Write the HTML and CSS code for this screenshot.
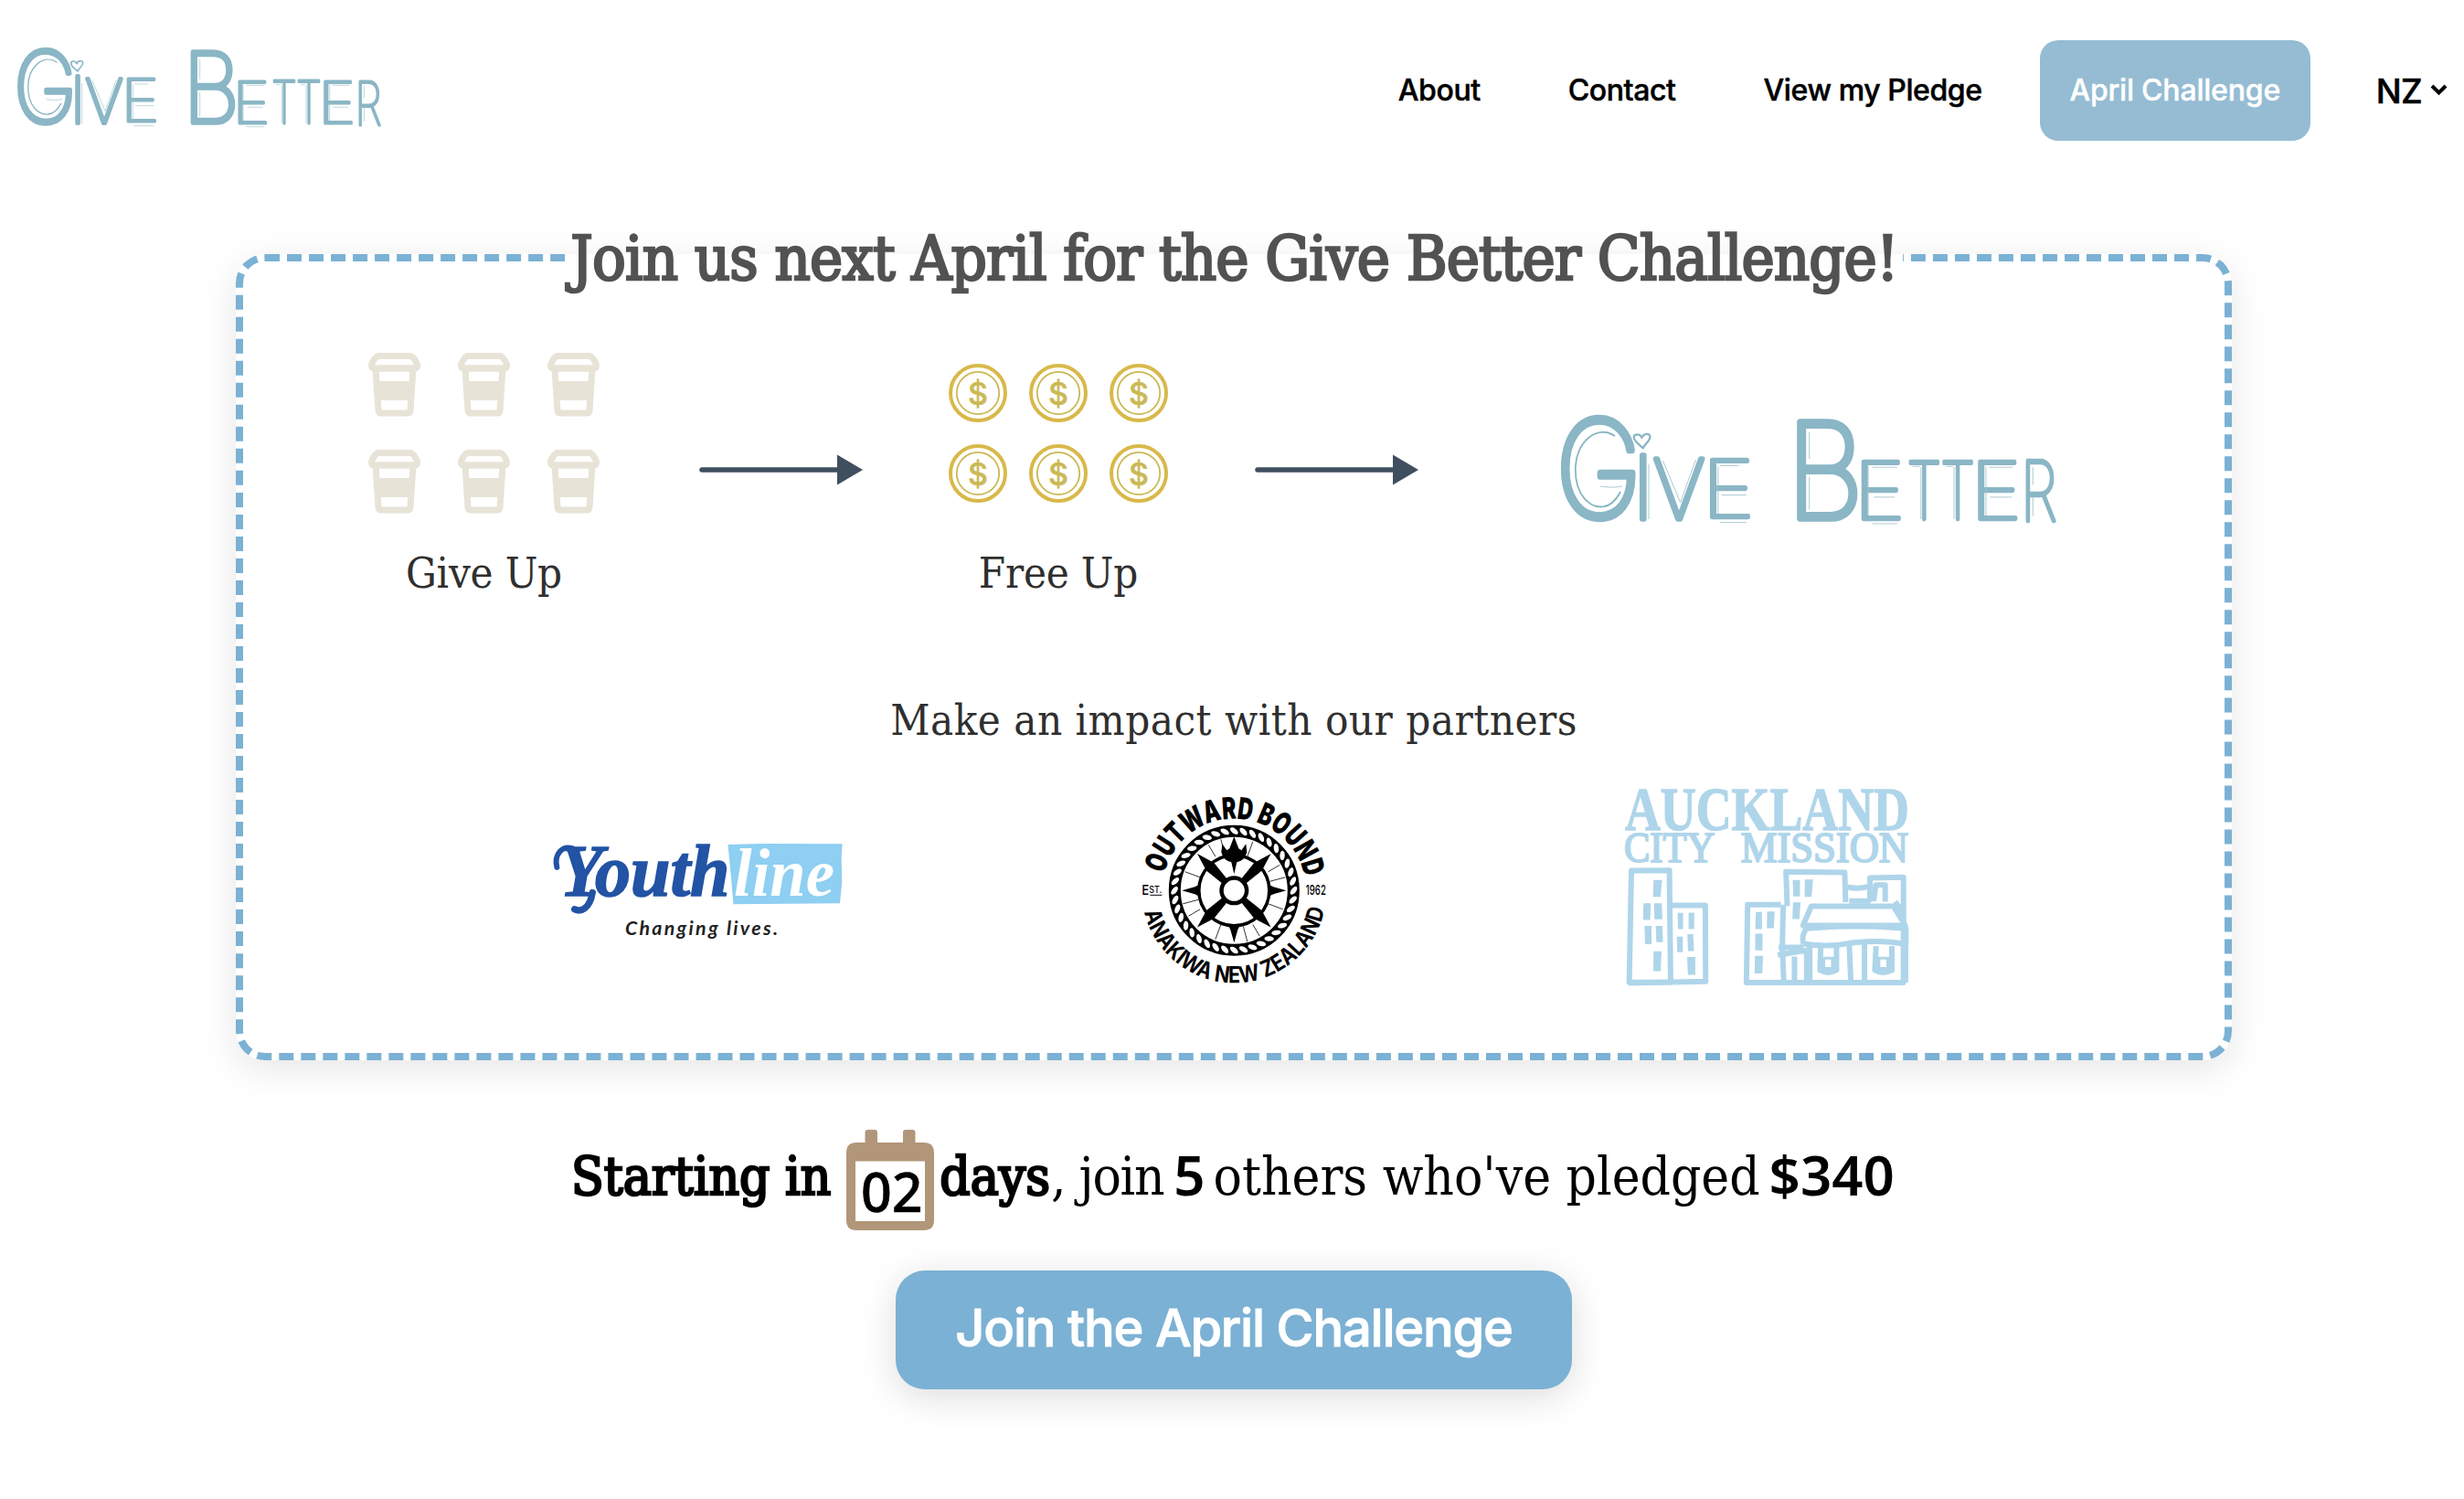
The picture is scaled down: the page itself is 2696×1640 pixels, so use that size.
FILE: index.html
```html
<!DOCTYPE html>
<html lang="en">
<head>
<meta charset="utf-8">
<title>Give Better</title>
<link rel="stylesheet" href="styles.css">
</head>
<body>
<svg class="defs" aria-hidden="true">
  <symbol id="cup" viewBox="0 0 57 70">
    <path class="cup-line" d="M11 3.500H46C49 3.500 53.500 11 53.500 14C53.500 16 52.500 17 51 17H6C4.500 17 3.500 16 3.500 14C3.500 11 8 3.500 11 3.500Z"/>
    <path class="cup-line" d="M8 17H49L46 63Q45.800 66 43 66H14Q11.200 66 11 63Z"/>
    <path class="cup-fill" d="M9 31H48L47 52H10Z"/>
  </symbol>
  <symbol id="coin" viewBox="0 0 64 64">
    <circle class="coin-rim" cx="32" cy="32" r="30"/>
    <circle class="coin-ring" cx="32" cy="32" r="23.200"/>
    <text class="coin-text" x="32" y="44.500">$</text>
  </symbol>
  <symbol id="arrow" viewBox="0 0 179 34">
    <path class="arrow-line" d="M3 17H155"/>
    <path class="arrow-head" d="M151 .5L179 17L151 33.500Z"/>
  </symbol>
  <g id="wordmark">
    <g class="big-letters">
      <text transform="translate(44 311) scale(.87 1)" font-size="324">G</text>
      <text transform="translate(601 313) scale(.91 1)" font-size="319">B</text>
    </g>
    <g class="small-letters">
      <text class="stem" transform="translate(228.500 314)" font-size="213">I</text>
      <text class="stem" transform="translate(279 315) scale(.98 1)" font-size="201">V</text>
      <text transform="translate(397 310) scale(1.130 1)" font-size="192">E</text>
      <text transform="translate(763 315) scale(1.110 1)" font-size="191">E</text>
      <text transform="translate(891 315) scale(.715 1)" font-size="191">T</text>
      <text transform="translate(972 315) scale(.715 1)" font-size="191">T</text>
      <text transform="translate(1044 315) scale(1.110 1)" font-size="191">E</text>
      <text transform="translate(1165 320) scale(.725 1)" font-size="199">R</text>
    </g>
    <path class="heart" d="M255 144C246 134 233 128 233 118C233 109 248 108 252 119C256 107 273 107 272 117C271 128 260 132 255 144Z"/>
    <path class="shade" d="M186 114C145 86 92 128 92 195C92 262 130 288 158 285C178 283 192 265 200 250"/>
    <path class="hair" d="M152 236Q180 241 205 236M269 183V315M303 174L345 275L382 172M436 188V302M440 186H485M444 257H504M440 323H505M656 105V170M656 213V292M798 188V306M808 190H868M812 262H862M808 326H868M925 190V315M905 188H923M1005 190V315M987 188H1003M1082 188V306M1090 190H1146M1092 262H1144M1195 190V232M1195 262V308"/>
  </g>
</svg>

<header class="header">
  <svg class="brand" viewBox="0 12 1320 390" role="img" aria-label="Give Better"><use href="#wordmark"/></svg>
  <nav class="nav">
    <a class="link">About</a>
    <a class="link">Contact</a>
    <a class="link">View my Pledge</a>
    <a class="cta">April Challenge</a>
    <div class="region">NZ
      <svg class="chevron" viewBox="0 0 19 12"><path d="M2 2L9.500 9.500L17 2"/></svg>
    </div>
  </nav>
</header>

<main class="main">
  <fieldset class="card">
    <legend class="title">Join us next April for the Give Better Challenge!</legend>
    <div class="steps">
      <div class="step">
        <div class="cups">
          <svg><use href="#cup"/></svg><svg><use href="#cup"/></svg><svg><use href="#cup"/></svg>
          <svg><use href="#cup"/></svg><svg><use href="#cup"/></svg><svg><use href="#cup"/></svg>
        </div>
        <p class="label">Give Up</p>
      </div>
      <svg class="arrow first"><use href="#arrow"/></svg>
      <div class="step">
        <div class="coins">
          <svg><use href="#coin"/></svg><svg><use href="#coin"/></svg><svg><use href="#coin"/></svg>
          <svg><use href="#coin"/></svg><svg><use href="#coin"/></svg><svg><use href="#coin"/></svg>
        </div>
        <p class="label">Free Up</p>
      </div>
      <svg class="arrow second"><use href="#arrow"/></svg>
      <svg class="wordmark" viewBox="0 0 1320 390" role="img" aria-label="Give Better"><use href="#wordmark"/></svg>
    </div>

    <h2 class="partners-title">Make an impact with our partners</h2>
    <div class="partners">
      <svg class="youthline" viewBox="75 60 955 320">
        <path class="yl-box" d="M650 77L760 74L1026 75L1023 120L1025 200L1018 270L668 273L660 180Z"/>
        <text class="yl-blue" x="96" y="246" textLength="560" lengthAdjust="spacingAndGlyphs">Youth</text>
        <path class="yl-swash" d="M88 152C78 110 104 80 138 90"/>
        <path class="yl-swash tail" d="M205 235C196 290 165 300 146 290"/>
        <text class="yl-white" x="670" y="247" textLength="330" lengthAdjust="spacingAndGlyphs">line</text>
        <text class="yl-tag" x="312" y="374" textLength="502">Changing lives.</text>
      </svg>

      <svg class="outward" viewBox="-120.300 -124.300 240 240">
        <defs>
          <path id="arc-top" d="M-78.500 0A78.500 78.500 0 0 1 78.500 0"/>
          <path id="arc-bottom" d="M-101 0A101 101 0 0 0 101 0"/>
          <ellipse id="strand" cx="0" cy="-65.200" rx="2.700" ry="5.200" transform="rotate(-52 0 -65.200)"/>
          <g id="strands5"><use href="#strand"/><use href="#strand" transform="rotate(9)"/><use href="#strand" transform="rotate(18)"/><use href="#strand" transform="rotate(27)"/><use href="#strand" transform="rotate(36)"/></g>
          <path id="spoke" d="M-3.500 -14L-6 -37L0 -57L6 -37L3.500 -14Z"/>
          <path id="point" d="M-6.500 -38L-4 -43L0 -57L4 -43L6.500 -38Z"/>
          <path id="rays" d="M14.500 -37.200L20.500 -53.500M37.200 -20.500L50 -28M39 -10L56 -14.500"/>
        </defs>
        <circle class="rope" r="65"/>
        <g class="strands">
          <use href="#strands5"/><use href="#strands5" transform="rotate(45)"/><use href="#strands5" transform="rotate(90)"/><use href="#strands5" transform="rotate(135)"/>
          <use href="#strands5" transform="rotate(180)"/><use href="#strands5" transform="rotate(225)"/><use href="#strands5" transform="rotate(270)"/><use href="#strands5" transform="rotate(315)"/>
        </g>
        <g class="rays"><use href="#rays"/><use href="#rays" transform="rotate(90)"/><use href="#rays" transform="rotate(180)"/><use href="#rays" transform="rotate(270)"/></g>
        <circle class="wheel" r="38.500"/>
        <use href="#spoke" transform="rotate(45)"/><use href="#spoke" transform="rotate(135)"/><use href="#spoke" transform="rotate(225)"/><use href="#spoke" transform="rotate(315)"/>
        <use href="#point" transform="rotate(90)"/><use href="#point" transform="rotate(180)"/><use href="#point" transform="rotate(270)"/>
        <path d="M0 -18L-3 -31Q-12 -33 -14 -42L-13 -51L-8 -44L-5 -46L0 -59L5 -46L8 -44L13 -51L14 -42Q12 -33 3 -31Z"/>
        <circle class="hub" r="13.800"/>
        <text class="ob-top"><textPath href="#arc-top" startOffset="18.500" textLength="213" lengthAdjust="spacingAndGlyphs">OUTWARD BOUND</textPath></text>
        <text class="ob-bottom"><textPath href="#arc-bottom" startOffset="24" textLength="272" lengthAdjust="spacingAndGlyphs">ANAKIWA NEW ZEALAND</textPath></text>
        <text class="ob-side" x="-101" y="5" textLength="22" lengthAdjust="spacingAndGlyphs">E<tspan font-size="10" dy="-2">ST.</tspan></text>
        <path d="M-92 4.500H-79V5.500H-92Z"/>
        <text class="ob-side" x="78.500" y="5" textLength="22" lengthAdjust="spacingAndGlyphs">1962</text>
      </svg>

      <svg class="mission" viewBox="50 40 940 650">
        <text class="acm-big" x="53" y="173" textLength="934" lengthAdjust="spacingAndGlyphs">AUCKLAND</text>
        <text class="acm-small" x="50" y="280" textLength="298" lengthAdjust="spacingAndGlyphs">CITY</text>
        <text class="acm-small" x="434" y="280" textLength="550" lengthAdjust="spacingAndGlyphs">MISSION</text>
        <g class="acm-walls">
          <path d="M67 675L74 308L199 307L203 674Z"/>
          <path d="M203 422H317L318 672L67 677"/>
          <path d="M565 420H456L452 676H968V330L858 332V410M586 425L582 312L775 314L778 412"/>
          <path d="M573 420L570 560L575 675M785 362Q815 370 850 361M790 408H860M870 408L877 355H908V410M940 410L970 450"/>
          <path d="M665 425H935L974 488H638ZM655 490Q630 520 640 550M640 548Q720 562 800 545Q900 535 976 550V498Q810 485 650 498M975 550V675"/>
          <path d="M558 560H640M555 585L650 570V670M610 590V670M660 550V670M790 550L795 670M840 550V670"/>
          <path d="M696 556L694 635Q720 650 748 635V556M700 600H745M878 556L874 635Q900 650 930 635V556M880 600H926"/>
        </g>
        <path class="acm-panes" d="M147 339H175L170 394H145ZM114 415H138L136 470H112ZM148 415H174L176 468H150ZM117 490H140V550H119ZM154 490H176L178 543H156ZM147 573H173L170 638H146ZM226 447H244V500H227ZM262 446H281L280 500H262ZM223 525H243V576H225ZM258 517H277L280 572H260ZM257 592H284V650H260ZM604 339H628V393H606ZM644 337H671L666 394H643ZM605 412H630L626 467H603ZM483 444H503V500H481ZM520 442H545L542 497H519ZM481 515H505V570H481ZM480 588H507L504 646H479Z"/>
        <path class="acm-panes" d="M690 600H752V642H690ZM870 600H934V642H870Z"/>
        <path class="acm-light" d="M711 600H730V625H711ZM892 600H912V625H892ZM711 565H730V580H711ZM892 565H912V580H892Z"/>
      </svg>
    </div>
  </fieldset>

  <p class="countdown">
    <b class="faux">Starting in</b>
    <svg class="calendar" viewBox="0 0 96 110">
      <path class="cal-frame" d="M20.500 14V3Q20.500 0 23.500 0H31Q34 0 34 3V14H62V3Q62 0 65 0H72.500Q75.500 0 75.500 3V14H85Q96 14 96 25V99Q96 110 85 110H11Q0 110 0 99V25Q0 14 11 14Z"/>
      <path class="cal-page" d="M10 34.500H86V100H10Z"/>
      <text class="cal-text" x="16" y="89.500">02</text>
    </svg>
    <b class="faux days">days</b>
    <span class="join">, join</span>
    <b class="num count">5</b>
    <span class="others">others who've pledged</span>
    <b class="num total">$340</b>
  </p>
  <button class="join-button">Join the April Challenge</button>
</main>
</body>
</html>
```
FILE: styles.css
```css
* { box-sizing: border-box; }
body { margin: 0; min-height: 1640px; background: #fff; color: #000; font-family: Inter, "Liberation Sans", sans-serif; }
p, h2 { margin: 0; font-weight: 400; }
svg { display: block; overflow: visible; }
.defs { width: 0; height: 0; position: absolute; }

/* header */
.header { height: 198px; display: flex; align-items: center; justify-content: space-between; padding-right: 18px; }
.brand { width: 440px; height: 130px; }
.nav { display: flex; align-items: center; font-size: 32px; font-weight: 500; letter-spacing: -.4px; white-space: nowrap; }
.link { margin: -2px 96px 0 0; -webkit-text-stroke: .5px #000; }
.link:nth-child(3) { margin-right: 63px; }
.cta { width: 296px; height: 110px; padding-bottom: 2px; border-radius: 20px; background: #95bcd3; color: #fff; display: flex; align-items: center; justify-content: center; font-weight: 500; letter-spacing: -.2px; -webkit-text-stroke: .4px #fff; }
.region { display: flex; align-items: center; gap: 9px; margin-left: 72px; font-size: 37px; letter-spacing: -.7px; font-weight: 500; -webkit-text-stroke: .5px #000; }
.chevron { width: 19px; height: 12px; margin-top: -2px; fill: none; stroke: #000; stroke-width: 4; }

/* hand-lettered wordmark */
.big-letters, .small-letters { font-family: Inter, sans-serif; font-weight: 100; fill: #8ab6c5; stroke: #8ab6c5; stroke-linejoin: round; }
.big-letters { stroke-width: 17; }
.small-letters { stroke-width: 9.500; }
.small-letters .stem { stroke-width: 12; }
.heart { fill: none; stroke: #8ab6c5; stroke-width: 5; stroke-linejoin: round; }
.shade { fill: none; stroke: #8ab6c5; stroke-width: 4; stroke-linecap: round; }
.hair { fill: none; stroke: #a3c3cc; stroke-width: 2; }

/* card */
.main { display: flex; flex-direction: column; align-items: center; padding: 39px 0 60px 4px; }
.card { width: 2184px; height: 923px; margin: 0; padding: 0; border: 8px dashed #7bb1d4; border-radius: 32px; box-shadow: 0 10px 40px rgba(0, 0, 0, .1); }
.title { width: 1464px; margin: 0 auto; padding: 2px 0 0 1px; text-align: center; white-space: nowrap; font: 68px/88px "DejaVu Serif Condensed", "DejaVu Serif", serif; letter-spacing: -.85px; color: #525252; -webkit-text-stroke: 2.500px #525252; }
.steps { display: flex; align-items: flex-start; padding: 59px 0 0 137px; }
.cups { width: 253px; height: 176px; display: grid; grid-template-columns: repeat(3, 57px); grid-auto-rows: 70px; gap: 36px 41px; }
.cups svg { width: 57px; height: 70px; }
.coins { width: 240px; height: 176px; padding-top: 12px; display: grid; grid-template-columns: repeat(3, 64px); grid-auto-rows: 64px; gap: 24px; }
.coins svg { width: 64px; height: 64px; }
.cup-line { fill: none; stroke: #e7e3d7; stroke-width: 7; stroke-linejoin: round; }
.cup-fill { fill: #e7e3d7; }
.coin-rim { fill: none; stroke: #d8b94a; stroke-width: 4; }
.coin-ring { fill: none; stroke: #cbb955; stroke-width: 1.8; }
.coin-text { font: 500 34px Inter, sans-serif; text-anchor: middle; fill: #cbb955; stroke: #cbb955; stroke-width: .5; }
.label { margin-top: 37px; text-align: center; font: 47px/56px "DejaVu Serif Condensed", "DejaVu Serif", serif; letter-spacing: -.2px; color: #2f2f2f; white-space: nowrap; }
.arrow { width: 179px; height: 34px; margin-top: 111px; }
.arrow.first { margin-left: 109px; margin-right: 94px; }
.arrow.second { margin-left: 95px; margin-right: 130px; }
.arrow-line { stroke: #3f4f5f; stroke-width: 5.5; stroke-linecap: round; }
.arrow-head { fill: #3f4f5f; }
.wordmark { width: 599px; height: 177px; margin-top: 39px; }

/* partners */
.partners-title { margin-top: 105px; text-align: center; font: 47px/56px "DejaVu Serif Condensed", "DejaVu Serif", serif; letter-spacing: .5px; color: #2f2f2f; }
.partners { display: flex; align-items: center; gap: 307px; height: 217px; margin: 47px 0 0 339px; }
.youthline { width: 318px; height: 107px; }
.yl-box { fill: #8ecff2; }
.yl-blue, .yl-white { font: italic 700 240px "Liberation Serif", serif; }
.yl-blue { fill: #2253a4; stroke: #2253a4; stroke-width: 5; }
.yl-swash { fill: none; stroke: #2253a4; stroke-width: 18; stroke-linecap: round; }
.yl-swash.tail { stroke-width: 22; }
.yl-white { fill: #fff; font-size: 225px; }
.yl-tag { font: italic 700 64px Lato, sans-serif; fill: #222; }
.outward { width: 240px; height: 240px; margin: -4px -0.5px 0 0; }
.rope { fill: none; stroke: #000; stroke-width: 13; }
.strands { fill: #fff; }
.rays { stroke: #000; stroke-width: .8; }
.wheel { fill: none; stroke: #000; stroke-width: 3.500; }
.hub { fill: #fff; stroke: #000; stroke-width: 4.500; }
.ob-top { font: 900 33px Inter, sans-serif; }
.ob-bottom { font: 700 25px Inter, sans-serif; }
.ob-side { font: 500 15px Inter, sans-serif; }
.mission { width: 313px; height: 217px; }
.acm-big { font: 700 200px "Liberation Serif", serif; fill: #afd5ea; stroke: #afd5ea; stroke-width: 4; }
.acm-small { font: 141px "Liberation Serif", serif; fill: #afd5ea; stroke: #afd5ea; stroke-width: 6; }
.acm-walls { fill: none; stroke: #afd5ea; stroke-width: 18; stroke-linejoin: round; }
.acm-panes { fill: #afd5ea; }
.acm-light { fill: #fff; }

/* countdown */
.countdown { align-self: flex-start; display: flex; align-items: flex-start; height: 110px; margin: 76px 0 0 621px; font: 58px/72px "DejaVu Serif Condensed", "DejaVu Serif", serif; white-space: nowrap; }
.countdown b, .countdown span { margin-top: 15px; }
.faux { font-weight: 400; -webkit-text-stroke: 2.500px #000; }
.countdown .num { margin-top: 13px; font: 600 60px/72px "Noto Sans", sans-serif; }
.calendar { width: 96px; height: 110px; margin: 0 6px 0 17px; }
.cal-frame { fill: #b19679; }
.cal-page { fill: #fff; }
.cal-text { font: 500 59px "Noto Sans", sans-serif; stroke: #000; stroke-width: .6; }
.join { margin-left: 1px; letter-spacing: -1.300px; }
.count { margin-left: 11px; }
.others { margin-left: 9px; }
.total { margin-left: 10px; }
.join-button { width: 740px; height: 130px; margin-top: 44px; padding: 0 0 4px; border: 0; border-radius: 32px; background: #7bb1d4; color: #fff; font: 500 56px Inter, sans-serif; letter-spacing: -1.200px; -webkit-text-stroke: 1px #fff; box-shadow: 0 8px 40px rgba(0, 0, 0, .14); }
```
